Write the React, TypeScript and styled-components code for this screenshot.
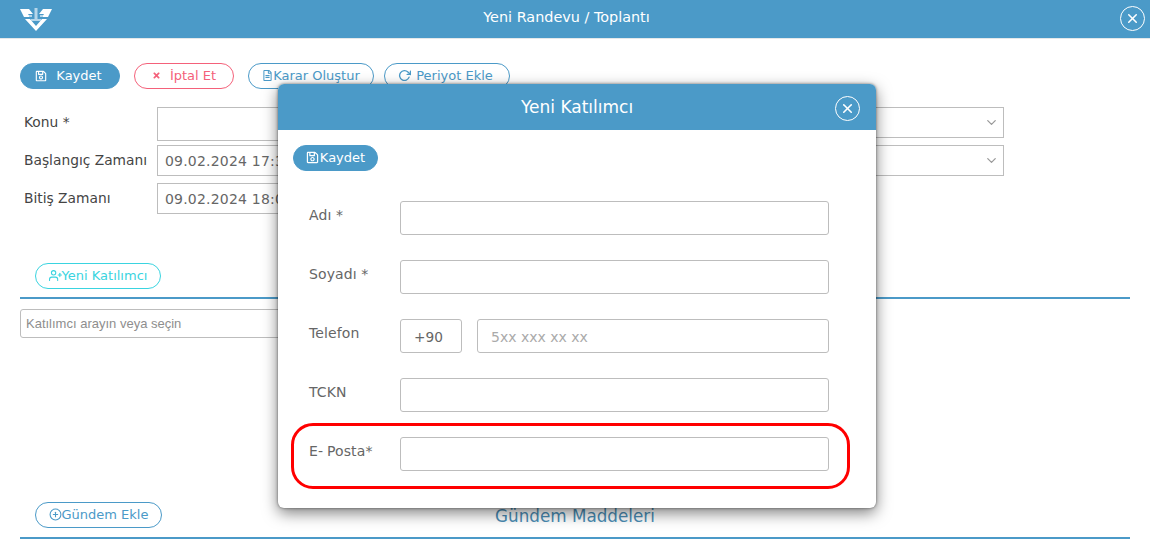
import styled, { createGlobalStyle } from 'styled-components'
import { FaRegSave, FaRegFileAlt, FaTimes } from 'react-icons/fa'
import { FiChevronDown, FiPlusCircle, FiRotateCw, FiUserPlus, FiX } from 'react-icons/fi'

const blue = '#4b9ac8'

const GlobalStyle = createGlobalStyle`
  html, body {
    margin: 0;
    padding: 0;
    background: #fff;
    font-family: 'DejaVu Sans', Verdana, sans-serif;
  }
  * {
    box-sizing: border-box;
  }
`

const Page = styled.div`
  position: relative;
  width: 1150px;
  height: 554px;
  overflow: hidden;
  background: #fff;
`

const TopBar = styled.header`
  position: relative;
  display: flex;
  align-items: center;
  justify-content: center;
  height: 39px;
  padding: 0 18px 4px 20px;
  background: ${blue};
  border-bottom: 1px solid #e4e8ea;
`

const Logo = styled.svg`
  position: absolute;
  left: 19px;
  top: 7px;
`

const TopTitle = styled.div`
  margin-left: -19px;
  color: #fff;
  font-size: 14.4px;
`

const CloseCircle = styled.button<{ $right: number; $top: number }>`
  position: absolute;
  right: ${(p) => p.$right}px;
  top: ${(p) => p.$top}px;
  display: flex;
  align-items: center;
  justify-content: center;
  width: 25px;
  height: 25px;
  padding: 0;
  color: #fff;
  background: transparent;
  border: 1px solid #fff;
  border-radius: 50%;
`

const Content = styled.main`
  padding: 24px 20px 0;
`

const Toolbar = styled.div`
  display: flex;
  gap: 14px;
  height: 26px;
  & > :last-child {
    margin-left: -4px;
  }
`

const Pill = styled.button<{
  $kind: 'solid' | 'outline' | 'danger' | 'teal'
  $width: number
  $gap?: number
  $shift?: number
}>`
  display: flex;
  align-items: center;
  justify-content: center;
  gap: ${(p) => p.$gap ?? 0}px;
  width: ${(p) => p.$width}px;
  height: 26px;
  padding: 0 ${(p) => p.$shift ?? 0}px 1px 0;
  font-family: inherit;
  font-size: 13px;
  white-space: nowrap;
  border-radius: 13px;
  background: ${(p) => (p.$kind === 'solid' ? blue : '#fff')};
  color: ${(p) =>
    p.$kind === 'solid' ? '#fff' : p.$kind === 'danger' ? '#f4617a' : p.$kind === 'teal' ? '#3ad4e0' : blue};
  border: 1px solid
    ${(p) => (p.$kind === 'solid' ? blue : p.$kind === 'danger' ? '#f4617a' : p.$kind === 'teal' ? '#3ad4e0' : blue)};
`

const FormGrid = styled.div`
  display: grid;
  grid-template-columns: 137px 343px 100px 404px;
  grid-template-rows: 38px 38px 31px;
  margin-top: 18px;
`

const FieldLabel = styled.label`
  padding-left: 4px;
  line-height: 30px;
  color: #444;
  font-size: 13.8px;
`

const Box = styled.div<{ $height: number }>`
  display: flex;
  align-items: center;
  height: ${(p) => p.$height}px;
  padding-left: 7px;
  color: #666;
  font-size: 14px;
  letter-spacing: 0.2px;
  white-space: nowrap;
  overflow: hidden;
  border: 1px solid #bdbdbd;
`

const SelectBox = styled(Box)`
  justify-content: flex-end;
  padding-right: 4px;
  color: #999;
`

const Spacer = styled.div``

const SectionHead = styled.div<{ $top: number; $pad: number }>`
  position: relative;
  display: flex;
  margin-top: ${(p) => p.$top}px;
  padding: 0 0 ${(p) => p.$pad}px 15px;
  border-bottom: 2px solid ${blue};
`

const SearchBox = styled.div`
  display: flex;
  align-items: center;
  width: 400px;
  height: 29px;
  margin-top: 10px;
  padding-left: 5px;
  color: #8e8e8e;
  font-family: 'Liberation Sans', Arial, sans-serif;
  font-size: 13px;
  border: 1px solid #bdbdbd;
  border-radius: 3px;
`

const AgendaTitle = styled.div`
  position: absolute;
  left: 475px;
  top: 4px;
  color: #4a8db5;
  font-size: 16.8px;
`

const Modal = styled.section`
  position: absolute;
  left: 278px;
  top: 84px;
  width: 598px;
  height: 424px;
  background: #fff;
  border-radius: 6px;
  box-shadow: 0 5px 15px rgba(0, 0, 0, 0.5), 0 0 3px rgba(0, 0, 0, 0.5);
  overflow: hidden;
`

const ModalHeader = styled.header`
  position: relative;
  display: flex;
  align-items: center;
  justify-content: center;
  height: 46px;
  color: #fff;
  font-size: 17px;
  background: ${blue};
`

const ModalBody = styled.div`
  display: flex;
  flex-direction: column;
  padding: 15px 47px 0 15px;
`

const Rows = styled.div`
  display: flex;
  flex-direction: column;
  gap: 25px;
  margin-top: 30px;
`

const Row = styled.div`
  position: relative;
  display: flex;
  align-items: flex-start;
  gap: 15px;
  padding-left: 16px;
`

const RowLabel = styled.label`
  flex: 0 0 91px;
  margin-right: -15px;
  padding-top: 6px;
  color: #666;
  font-size: 14px;
  letter-spacing: 0.1px;
  white-space: nowrap;
`

const WideDash = styled.span`
  letter-spacing: 4px;
`

const TextBox = styled.div<{ $width?: number }>`
  display: flex;
  align-items: center;
  flex: ${(p) => (p.$width ? `0 0 ${p.$width}px` : '1')};
  height: 34px;
  padding: 1px 0 0 13px;
  font-size: 13.7px;
  color: #666;
  border: 1px solid #bdbdbd;
  border-radius: 3px;
`

const Placeholder = styled.span`
  font-size: 14px;
  color: #aaa;
`

const Highlight = styled.div`
  position: absolute;
  left: -2px;
  top: -14px;
  width: 559px;
  height: 66px;
  border: 3px solid #f00;
  border-radius: 22px;
  pointer-events: none;
`

const formLeft = ['Konu *', 'Başlangıç Zamanı', 'Bitiş Zamanı']
const formValues = ['', '09.02.2024 17:30', '09.02.2024 18:00']
const formHeights = [34, 31, 31]

export default function App() {
  return (
    <Page>
      <GlobalStyle />
      <TopBar>
        <Logo width="34" height="26" viewBox="0 0 34 26">
          <path d="M1 2h9l4 5H9l2 3H5zM33 2h-9l-4 5h5l-2 3h6z" fill="#fff" />
          <path d="M6 12h5l6 7 6-7h5L17 24z" fill="#fff" />
          <path d="M15.5 1h3v11h-3zM10 8h3v2h-3zM21 8h3v2h-3zM12 12h10v2H12z" fill="#b5d6ea" />
        </Logo>
        <TopTitle>Yeni Randevu / Toplantı</TopTitle>
        <CloseCircle $right={5} $top={6}>
          <FiX size={15} strokeWidth={2.5} />
        </CloseCircle>
      </TopBar>
      <Content>
        <Toolbar>
          <Pill $kind="solid" $width={100} $gap={9} $shift={3}>
            <FaRegSave size={12} />
            Kaydet
          </Pill>
          <Pill $kind="danger" $width={100} $gap={9}>
            <FaTimes size={9} />
            İptal Et
          </Pill>
          <Pill $kind="outline" $width={126}>
            <FaRegFileAlt size={11} />
            Karar Oluştur
          </Pill>
          <Pill $kind="outline" $width={126} $gap={5} $shift={3}>
            <FiRotateCw size={13} strokeWidth={2.5} />
            Periyot Ekle
          </Pill>
        </Toolbar>
        <FormGrid>
          {formLeft.map((label, i) => (
            <FormRow key={label} label={label} value={formValues[i]} height={formHeights[i]} select={i < 2} />
          ))}
        </FormGrid>
        <SectionHead $top={49} $pad={8}>
          <Pill $kind="teal" $width={126}>
            <FiUserPlus size={13} />
            Yeni Katılımcı
          </Pill>
        </SectionHead>
        <SearchBox>Katılımcı arayın veya seçin</SearchBox>
        <SectionHead $top={164} $pad={9}>
          <Pill $kind="outline" $width={127}>
            <FiPlusCircle size={13} />
            Gündem Ekle
          </Pill>
          <AgendaTitle>Gündem Maddeleri</AgendaTitle>
        </SectionHead>
      </Content>
      <Modal>
        <ModalHeader>
          Yeni Katılımcı
          <CloseCircle $right={16} $top={12}>
            <FiX size={15} strokeWidth={2.5} />
          </CloseCircle>
        </ModalHeader>
        <ModalBody>
          <Pill $kind="solid" $width={85} $gap={1}>
            <FaRegSave size={13} />
            Kaydet
          </Pill>
          <Rows>
            <Row>
              <RowLabel>Adı *</RowLabel>
              <TextBox />
            </Row>
            <Row>
              <RowLabel>Soyadı *</RowLabel>
              <TextBox />
            </Row>
            <Row>
              <RowLabel>Telefon</RowLabel>
              <TextBox $width={62}>+90</TextBox>
              <TextBox>
                <Placeholder>5xx xxx xx xx</Placeholder>
              </TextBox>
            </Row>
            <Row>
              <RowLabel>TCKN</RowLabel>
              <TextBox />
            </Row>
            <Row>
              <RowLabel>
                E<WideDash>-</WideDash>Posta*
              </RowLabel>
              <TextBox />
              <Highlight />
            </Row>
          </Rows>
        </ModalBody>
      </Modal>
    </Page>
  )
}

function FormRow({
  label,
  value,
  height,
  select,
}: {
  label: string
  value: string
  height: number
  select: boolean
}) {
  return (
    <>
      <FieldLabel>{label}</FieldLabel>
      <Box $height={height}>{value}</Box>
      <Spacer />
      {select ? (
        <SelectBox $height={31}>
          <FiChevronDown size={15} />
        </SelectBox>
      ) : (
        <Spacer />
      )}
    </>
  )
}
